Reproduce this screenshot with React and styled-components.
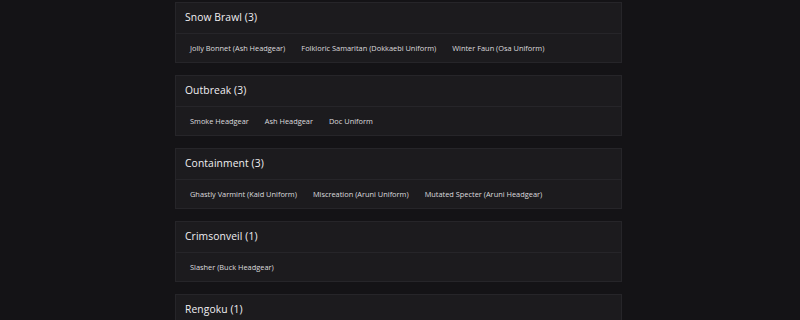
import React from "react";
import styled, { createGlobalStyle } from "styled-components";

const GlobalStyle = createGlobalStyle`
  html, body {
    margin: 0;
    padding: 0;
    background: #141316;
  }
  body {
    font-family: "Open Sans", "Noto Sans", sans-serif;
    color: #e6e5e8;
  }
`;

const Page = styled.div`
  width: 800px;
  height: 320px;
  overflow: hidden;
  display: flex;
  padding-left: 175px;
  box-sizing: border-box;
`;

const Column = styled.div`
  width: 447px;
  padding-top: 2px;
  display: flex;
  flex-direction: column;
  gap: 12px;
`;

const Card = styled.section`
  background: #1c1b1e;
  border: 1px solid #262529;
  box-sizing: border-box;
`;

const CardHeader = styled.h2`
  margin: 0;
  height: 31px;
  display: flex;
  align-items: center;
  padding: 0 9px 2px;
  font-size: 10.3px;
  font-weight: 500;
  letter-spacing: 0.1px;
  color: #f0eff2;
  border-bottom: 1px solid #262529;
  box-sizing: border-box;
`;

const ItemRow = styled.div`
  height: 28px;
  display: flex;
  align-items: center;
  gap: 16px;
  padding: 0 14px 1px;
  box-sizing: border-box;
`;

const Item = styled.span`
  font-size: 7.4px;
  font-weight: 500;
  color: #dcdbde;
  white-space: nowrap;
`;

const groups = [
  {
    name: "Snow Brawl",
    count: 3,
    items: [
      "Jolly Bonnet (Ash Headgear)",
      "Folkloric Samaritan (Dokkaebi Uniform)",
      "Winter Faun (Osa Uniform)",
    ],
  },
  {
    name: "Outbreak",
    count: 3,
    items: ["Smoke Headgear", "Ash Headgear", "Doc Uniform"],
  },
  {
    name: "Containment",
    count: 3,
    items: [
      "Ghastly Varmint (Kaid Uniform)",
      "Miscreation (Aruni Uniform)",
      "Mutated Specter (Aruni Headgear)",
    ],
  },
  {
    name: "Crimsonveil",
    count: 1,
    items: ["Slasher (Buck Headgear)"],
  },
  {
    name: "Rengoku",
    count: 1,
    items: [],
  },
];

export default function App() {
  return (
    <>
      <GlobalStyle />
      <Page>
        <Column>
          {groups.map((group) => (
            <Card key={group.name}>
              <CardHeader>
                {group.name} ({group.count})
              </CardHeader>
              <ItemRow>
                {group.items.map((item, index) => (
                  <Item key={`item-${index}`}>{item}</Item>
                ))}
              </ItemRow>
            </Card>
          ))}
        </Column>
      </Page>
    </>
  );
}
